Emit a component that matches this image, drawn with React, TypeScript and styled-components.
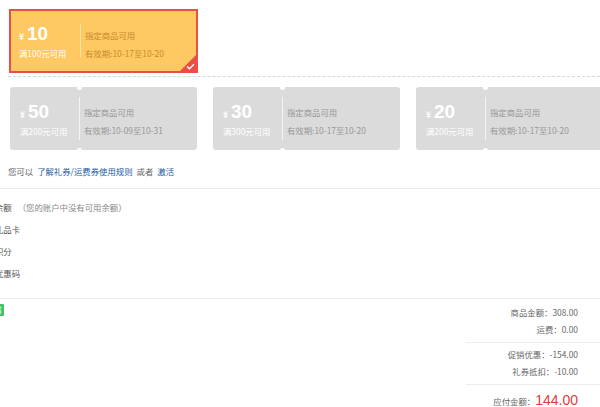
import styled, { createGlobalStyle } from 'styled-components';

const GlobalStyle = createGlobalStyle`
  html, body {
    margin: 0;
    padding: 0;
    background: #fff;
  }
  body {
    font-family: "Noto Sans CJK SC", "Liberation Sans", sans-serif;
    font-size: 8.4px;
    color: #666;
    overflow: hidden;
  }
`;

const Page = styled.div`
  width: 600px;
  height: 407px;
  overflow: hidden;
`;

const CouponSection = styled.div`
  padding: 9px 0 0 10px;
`;

const CouponRow = styled.div`
  display: flex;
  gap: 16px;
  padding-top: 10px;
  white-space: nowrap;
`;

const Coupon = styled.div<{ $selected?: boolean }>`
  position: relative;
  flex: none;
  box-sizing: border-box;
  display: flex;
  align-items: stretch;
  width: ${(p) => (p.$selected ? '189px' : '187px')};
  height: ${(p) => (p.$selected ? '64px' : '63px')};
  margin-left: ${(p) => (p.$selected ? '-1px' : '0')};
  background: ${(p) => (p.$selected ? '#fec862' : '#dbdbdb')};
  border: ${(p) => (p.$selected ? '2px solid #ea4f47' : 'none')};
  border-radius: ${(p) => (p.$selected ? '0' : '3px')};
  overflow: hidden;
`;

const Face = styled.div<{ $selected?: boolean }>`
  width: 69px;
  flex: none;
  box-sizing: border-box;
  padding: ${(p) => (p.$selected ? '12px 0 0 8px' : '14px 0 0 10px')};
  color: #fff;
`;

const Amount = styled.div`
  display: flex;
  align-items: baseline;
  height: 22px;
`;

const Yen = styled.span`
  font-size: 8.4px;
  font-weight: bold;
  margin-right: 3px;
`;

const Value = styled.span`
  font-family: "Liberation Sans", "Noto Sans", sans-serif;
  font-size: 19px;
  font-weight: bold;
  line-height: 22px;
`;

const Limit = styled.div`
  margin-top: 2px;
  line-height: 13px;
`;

const Divider = styled.div<{ $selected?: boolean }>`
  width: 1px;
  flex: none;
  margin: ${(p) => (p.$selected ? '13px 0 13px 0' : '10px 0')};
  background: ${(p) => (p.$selected ? 'rgba(255,255,255,0.45)' : 'rgba(255,255,255,0.7)')};
`;

const Notch = styled.span<{ $bottom?: boolean }>`
  position: absolute;
  left: 67px;
  ${(p) => (p.$bottom ? 'bottom: -2.5px;' : 'top: -2.5px;')}
  width: 5px;
  height: 5px;
  border-radius: 50%;
  background: #fff;
`;

const Info = styled.div<{ $selected?: boolean }>`
  padding: ${(p) => (p.$selected ? '18px 0 0 4px' : '19px 0 0 4px')};
  color: ${(p) => (p.$selected ? '#c98b2c' : '#979797')};
  line-height: 13px;
  display: flex;
  flex-direction: column;
  gap: 5px;
`;

const Corner = styled.span`
  position: absolute;
  right: 0;
  bottom: 0;
  width: 0;
  height: 0;
  border-style: solid;
  border-width: 0 0 16px 16px;
  border-color: transparent transparent #ea4f47 transparent;
`;

const Check = styled.svg`
  position: absolute;
  right: 1px;
  bottom: 1px;
`;

const DashedLine = styled.div`
  margin: 3px 0 0 -2px;
  border-top: 1px dashed #d8d8d8;
`;

const Tip = styled.div`
  padding: 15px 0 10px 8px;
  line-height: 13px;
  color: #666;
`;

const TipLink = styled.a`
  color: #1b5aa3;
  text-decoration: none;
  margin: 0 4px;
`;

const Rule = styled.div<{ $short?: boolean }>`
  height: 1px;
  background: #ececec;
  margin-left: ${(p) => (p.$short ? '466px' : '0')};
`;

const Options = styled.div`
  padding: 7px 0 14px 0;
  margin-left: -5px;
`;

const OptionRow = styled.div`
  height: 22px;
  line-height: 22px;
  color: #555;
`;

const Hint = styled.span`
  color: #888;
  margin-left: 4px;
`;

const BadgeRow = styled.div`
  height: 14px;
  padding-top: 4px;
  margin-left: -8px;
`;

const Badge = styled.span`
  display: inline-block;
  height: 12px;
  line-height: 12px;
  padding: 0 2px;
  background: #3cc36e;
  color: #fff;
  font-size: 8px;
  border-radius: 1px;
`;

const Summary = styled.div`
  margin-top: -13px;
`;

const SummaryGroup = styled.div<{ $first?: boolean }>`
  padding: ${(p) => (p.$first ? '0 22px 4px 0' : '3px 22px 4px 0')};
`;

const Line = styled.div<{ $total?: boolean }>`
  display: flex;
  justify-content: flex-end;
  align-items: baseline;
  height: ${(p) => (p.$total ? '24px' : '17px')};
  line-height: ${(p) => (p.$total ? '24px' : '17px')};
  color: #666;
`;

const Total = styled.span`
  color: #e4393c;
  font-size: 14px;
  font-family: "Liberation Sans", "Noto Sans", sans-serif;
`;

type CouponData = { value: string; limit: string; range: string };

const coupons: CouponData[] = [
  { value: '50', limit: '满200元可用', range: '有效期:10-09至10-31' },
  { value: '30', limit: '满300元可用', range: '有效期:10-17至10-20' },
  { value: '20', limit: '满200元可用', range: '有效期:10-17至10-20' },
];

function CouponCard({ data, selected }: { data: CouponData; selected?: boolean }) {
  return (
    <Coupon $selected={selected}>
      <Face $selected={selected}>
        <Amount>
          <Yen>¥</Yen>
          <Value>{data.value}</Value>
        </Amount>
        <Limit>{data.limit}</Limit>
      </Face>
      <Divider $selected={selected} />
      <Info $selected={selected}>
        <span>指定商品可用</span>
        <span>{data.range}</span>
      </Info>
      {selected ? (
        <>
          <Corner />
          <Check width="9" height="7" viewBox="0 0 9 7">
            <path d="M1 3.6 L3.4 5.8 L8 1.2" fill="none" stroke="#fff" strokeWidth="1.4" />
          </Check>
        </>
      ) : (
        <>
          <Notch />
          <Notch $bottom />
        </>
      )}
    </Coupon>
  );
}

export default function App() {
  return (
    <Page>
      <GlobalStyle />
      <CouponSection>
        <CouponCard selected data={{ value: '10', limit: '满100元可用', range: '有效期:10-17至10-20' }} />
        <DashedLine />
        <CouponRow>
          {coupons.map((c) => (
            <CouponCard key={c.value} data={c} />
          ))}
        </CouponRow>
      </CouponSection>
      <Tip>
        您可以<TipLink>了解礼券/运费券使用规则</TipLink>或者<TipLink>激活</TipLink>
      </Tip>
      <Rule />
      <Options>
        <OptionRow>
          余额 <Hint>（您的账户中没有可用余额）</Hint>
        </OptionRow>
        <OptionRow>礼品卡</OptionRow>
        <OptionRow>积分</OptionRow>
        <OptionRow>优惠码</OptionRow>
      </Options>
      <Rule />
      <BadgeRow>
        <Badge>省</Badge>
      </BadgeRow>
      <Summary>
        <SummaryGroup $first>
          <Line>商品金额：308.00</Line>
          <Line>运费：0.00</Line>
        </SummaryGroup>
        <Rule $short />
        <SummaryGroup>
          <Line>促销优惠：-154.00</Line>
          <Line>礼券抵扣：-10.00</Line>
        </SummaryGroup>
        <Rule $short />
        <SummaryGroup>
          <Line $total>
            应付金额：<Total>144.00</Total>
          </Line>
        </SummaryGroup>
      </Summary>
    </Page>
  );
}
